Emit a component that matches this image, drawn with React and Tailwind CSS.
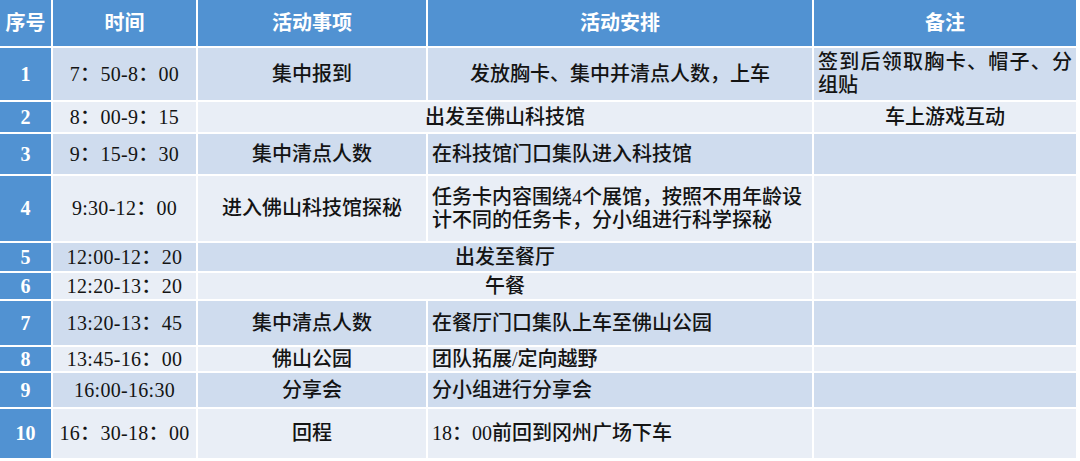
import React from "react";

const rows = [
  { n: "1", t: "7：50-8：00", a: "集中报到", b: "发放胸卡、集中并清点人数，上车", bAlign: "center", c: "签到后领取胸卡、帽子、分组贴", cAlign: "justify", h: "h-[52px]" },
  { n: "2", t: "8：00-9：15", span: "出发至佛山科技馆", c: "车上游戏互动", cAlign: "center", h: "h-[30px]" },
  { n: "3", t: "9：15-9：30", a: "集中清点人数", b: "在科技馆门口集队进入科技馆", h: "h-[40px]" },
  { n: "4", t: "9:30-12：00", a: "进入佛山科技馆探秘", b: "任务卡内容围绕4个展馆，按照不用年龄设计不同的任务卡，分小组进行科学探秘", h: "h-[65px]" },
  { n: "5", t: "12:00-12：20", span: "出发至餐厅", h: "h-[28px]" },
  { n: "6", t: "12:20-13：20", span: "午餐", h: "h-[26px]" },
  { n: "7", t: "13:20-13：45", a: "集中清点人数", b: "在餐厅门口集队上车至佛山公园", h: "h-[44px]" },
  { n: "8", t: "13:45-16：00", a: "佛山公园", b: "团队拓展/定向越野", h: "h-[24px]" },
  { n: "9", t: "16:00-16:30", a: "分享会", b: "分小组进行分享会", h: "h-[34px]" },
  { n: "10", t: "16：30-18：00", a: "回程", b: "18：00前回到冈州广场下车", h: "h-[49px]" },
];

const font = { fontFamily: '"Liberation Serif", "Noto Sans CJK SC", serif' };

export default function App() {
  return (
    <div className="w-[1080px] h-[461px] bg-white overflow-hidden" style={font}>
      <div className="grid grid-cols-[51px_143px_228px_384px_262px] gap-x-[2px] gap-y-[2px] w-[1076px] text-[20px] text-[#141414] leading-[23px] font-medium">
        {/* header */}
        {["序号", "时间", "活动事项", "活动安排", "备注"].map((h) => (
          <div key={h} className="h-[46px] bg-[#5192d2] text-white font-bold flex items-center justify-center">
            {h}
          </div>
        ))}
        {rows.map((r, i) => {
          const bg = i % 2 === 0 ? "bg-[#cfdcee]" : "bg-[#e9eef6]";
          return (
            <React.Fragment key={r.n}>
              <div className={`${r.h} bg-[#5192d2] text-white font-bold flex items-center justify-center`}>{r.n}</div>
              <div className={`${r.h} ${bg} flex items-center justify-center tracking-[0.3px]`}>{r.t}</div>
              {r.span ? (
                <div className={`${r.h} ${bg} col-span-2 flex items-center justify-center`}>{r.span}</div>
              ) : (
                <>
                  <div className={`${r.h} ${bg} flex items-center justify-center`}>{r.a}</div>
                  <div className={`${r.h} ${bg} flex items-center px-1 ${r.bAlign === "center" ? "justify-center text-center" : "justify-start text-left"}`}>
                    <span>{r.b}</span>
                  </div>
                </>
              )}
              <div className={`${r.h} ${bg} flex items-center px-1 ${r.cAlign === "center" ? "justify-center text-center" : "justify-start text-justify"}`}>
                {r.c ? <span className="w-full">{r.c}</span> : null}
              </div>
            </React.Fragment>
          );
        })}
      </div>
    </div>
  );
}
